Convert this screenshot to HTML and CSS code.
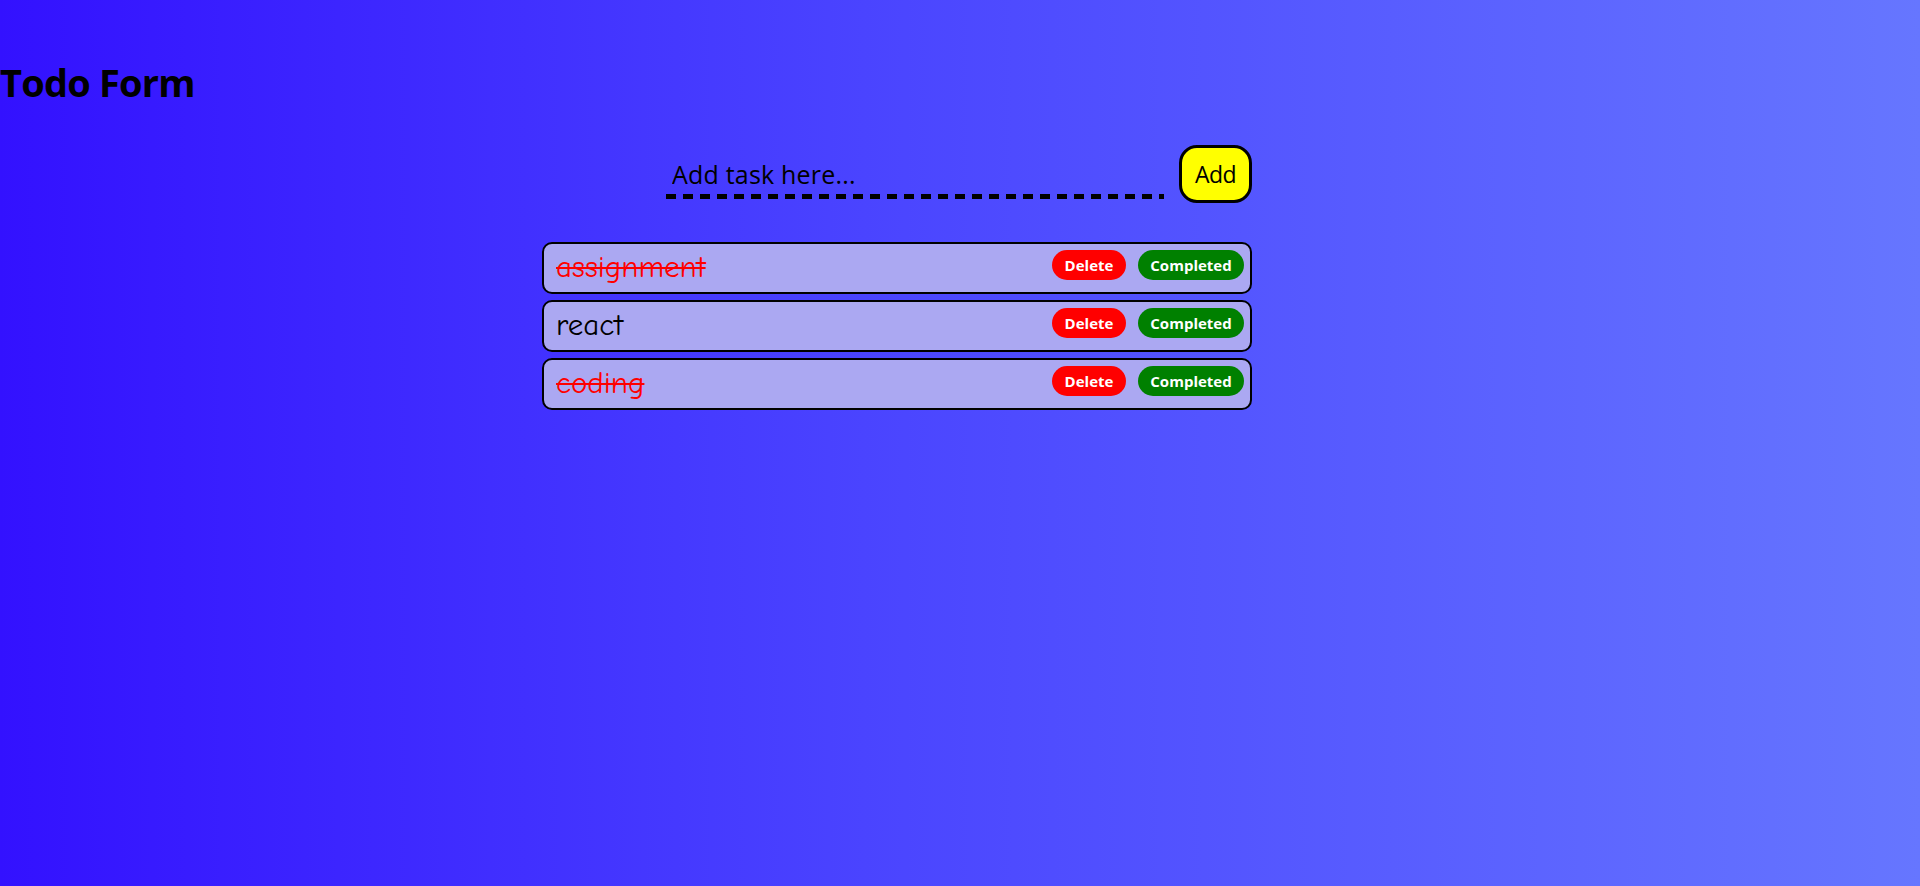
FILE: index.html
```html
<!DOCTYPE html>
<html lang="en">
<head>
<meta charset="utf-8">
<title>Todo Form</title>
<link rel="stylesheet" href="styles.css">
</head>
<body>
<h1 class="title">Todo Form</h1>
<main class="app">
  <form class="todo-form">
    <input class="task-input" type="text" placeholder="Add task here...">
    <button class="add-btn" type="button">Add</button>
  </form>
  <ul class="todo-list">
    <li class="todo-item">
      <span class="todo-text done">assignment</span>
      <div class="actions">
        <button class="btn btn-delete" type="button">Delete</button>
        <button class="btn btn-complete" type="button">Completed</button>
      </div>
    </li>
    <li class="todo-item">
      <span class="todo-text">react</span>
      <div class="actions">
        <button class="btn btn-delete" type="button">Delete</button>
        <button class="btn btn-complete" type="button">Completed</button>
      </div>
    </li>
    <li class="todo-item">
      <span class="todo-text done">coding</span>
      <div class="actions">
        <button class="btn btn-delete" type="button">Delete</button>
        <button class="btn btn-complete" type="button">Completed</button>
      </div>
    </li>
  </ul>
</main>
</body>
</html>
```
FILE: styles.css
```css
html, body {
  margin: 0;
  padding: 0;
}
body {
  min-height: 100vh;
  background: linear-gradient(to right, #3311ff 0%, #4a44ff 45%, #6676ff 100%);
  font-family: "Open Sans", "Noto Sans", sans-serif;
  color: #000;
}
.title {
  margin: 0;
  padding-top: 58px;
  font-size: 38px;
  line-height: 48px;
  font-weight: 700;
  letter-spacing: -0.8px;
}
.app {
  width: 710px;
  margin-left: 542px;
  padding-top: 39px;
}
.todo-form {
  display: flex;
  justify-content: flex-end;
  align-items: center;
  gap: 15px;
  margin: 0;
}
.task-input {
  width: 498px;
  height: 48px;
  margin-top: 2px;
  box-sizing: border-box;
  border: none;
  background-color: transparent;
  background-image: repeating-linear-gradient(to right, #000 0 10px, transparent 10px 17px);
  background-size: 100% 5px;
  background-position: left bottom;
  background-repeat: no-repeat;
  font-family: "Open Sans", "Noto Sans", sans-serif;
  font-size: 25px;
  letter-spacing: 0.2px;
  padding: 0 6px 3px;
  outline: none;
  color: #000;
}
.task-input::placeholder {
  color: #000;
  opacity: 1;
}
.add-btn {
  width: 73px;
  height: 58px;
  box-sizing: border-box;
  background: #ffff00;
  border: 3px solid #000;
  border-radius: 18px;
  font-family: "Open Sans", "Noto Sans", sans-serif;
  font-size: 23px;
  letter-spacing: -0.5px;
  color: #000;
  padding: 0;
}
.todo-list {
  list-style: none;
  margin: 39px 0 0;
  padding: 0;
  display: flex;
  flex-direction: column;
  gap: 6px;
}
.todo-item {
  display: flex;
  align-items: flex-start;
  justify-content: space-between;
  height: 52px;
  box-sizing: border-box;
  border: 2px solid #000;
  border-radius: 10px;
  background: #aba8f2;
  padding: 0 6px 0 12px;
}
.todo-text {
  font-family: "Comic Sans MS", "Comic Neue", cursive;
  font-size: 31px;
  line-height: 46px;
  color: #000;
}
.todo-text.done {
  color: #ff0000;
  text-decoration: line-through;
  text-decoration-thickness: 2px;
}
.actions {
  display: flex;
  gap: 12px;
  margin-top: 6px;
}
.btn {
  height: 30px;
  border: none;
  border-radius: 15px;
  color: #fff;
  font-family: "Open Sans", "Noto Sans", sans-serif;
  font-weight: 700;
  font-size: 15px;
  padding: 0 10px;
}
.btn-delete {
  background: #ff0000;
  min-width: 74px;
}
.btn-complete {
  background: #008000;
  min-width: 106px;
}
```
